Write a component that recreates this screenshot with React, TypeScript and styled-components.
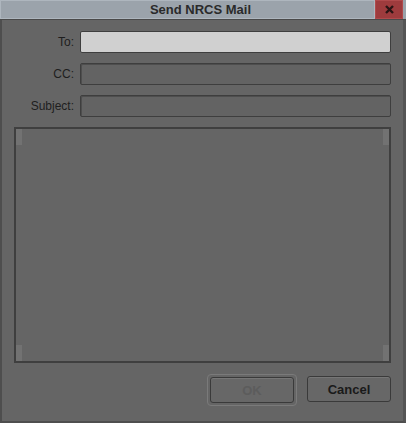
import React from "react";
import styled, { createGlobalStyle } from "styled-components";

const Global = createGlobalStyle`
  html, body { margin: 0; padding: 0; background: #5a5a5a; }
  body { font-family: "Liberation Sans", Arial, sans-serif; }
`;

const Window = styled.div`
  width: 406px;
  height: 423px;
  box-sizing: border-box;
  background: #656565;
  border-left: 2px solid #4e4e4e;
  border-right: 3px solid #555;
  border-bottom: 2px solid #4e4e4e;
  display: flex;
  flex-direction: column;
`;

const TitleBar = styled.div`
  height: 19px;
  flex: none;
  display: flex;
  align-items: stretch;
  background: #9ba3ab;
  border-bottom: 1px solid #4a4a4a;
  margin-left: -2px;
  margin-right: -3px;
`;

const Title = styled.div`
  flex: 1;
  display: flex;
  align-items: center;
  justify-content: center;
  font-size: 13px;
  font-weight: bold;
  color: #2a2a2a;
  border: 1px solid #aeb6be;
  padding-left: 26px;
`;

const Close = styled.div`
  width: 26px;
  margin-right: 3px;
  background: #9e3b3d;
  border: 1px solid #b04a4c;
  display: flex;
  align-items: center;
  justify-content: center;
`;

const Body = styled.div`
  flex: 1;
  display: flex;
  flex-direction: column;
  padding: 11px 12px 0 12px;
`;

const Form = styled.div`
  display: grid;
  grid-template-columns: 60px 1fr;
  column-gap: 6px;
  row-gap: 10px;
  align-items: center;
`;

const Label = styled.label`
  text-align: right;
  font-size: 12px;
  color: #1e1e1e;
`;

const Input = styled.div<{ $active?: boolean }>`
  height: 22px;
  box-sizing: border-box;
  border: 1px solid #3e3e3e;
  border-radius: 2px;
  background: ${(p) => (p.$active ? "#d0d0d0" : "#636363")};
  box-shadow: ${(p) => (p.$active ? "none" : "inset 1px 1px 0 #4e4e4e")};
`;

const TextArea = styled.div`
  position: relative;
  margin-top: 10px;
  height: 236px;
  box-sizing: border-box;
  border: 2px solid #3f3f3f;
  background: #656565;
`;

const Cap = styled.div<{ $pos: string }>`
  position: absolute;
  width: 6px;
  height: 16px;
  background: #727272;
  ${(p) => p.$pos}
`;

const Buttons = styled.div`
  display: flex;
  justify-content: flex-end;
  gap: 10px;
  margin-top: 13px;
`;

const FocusRing = styled.div`
  padding: 2px;
  border: 1px solid #7a7a7a;
  border-radius: 4px;
  margin-top: -2px;
`;

const Button = styled.div<{ $disabled?: boolean }>`
  width: 84px;
  height: 26px;
  box-sizing: border-box;
  border: 1px solid #3a3a3a;
  border-radius: 3px;
  background: #676767;
  box-shadow: inset 0 1px 0 #767676;
  display: flex;
  align-items: center;
  justify-content: center;
  font-size: 13px;
  font-weight: bold;
  color: ${(p) => (p.$disabled ? "#5c5c5c" : "#1a1a1a")};
`;

export default function App() {
  return (
    <>
      <Global />
      <Window>
        <TitleBar>
          <Title>Send NRCS Mail</Title>
          <Close>
            <svg width="11" height="11" viewBox="0 0 11 11">
              <path d="M2 2 L9 9 M9 2 L2 9" stroke="#2a1414" strokeWidth="2.4" />
            </svg>
          </Close>
        </TitleBar>
        <Body>
          <Form>
            <Label>To:</Label>
            <Input $active />
            <Label>CC:</Label>
            <Input />
            <Label>Subject:</Label>
            <Input />
          </Form>
          <TextArea>
            <Cap $pos="top: 0; left: 0;" />
            <Cap $pos="top: 0; right: 0;" />
            <Cap $pos="bottom: 0; left: 0;" />
            <Cap $pos="bottom: 0; right: 0;" />
          </TextArea>
          <Buttons>
            <FocusRing>
              <Button $disabled>OK</Button>
            </FocusRing>
            <Button>Cancel</Button>
          </Buttons>
        </Body>
      </Window>
    </>
  );
}
